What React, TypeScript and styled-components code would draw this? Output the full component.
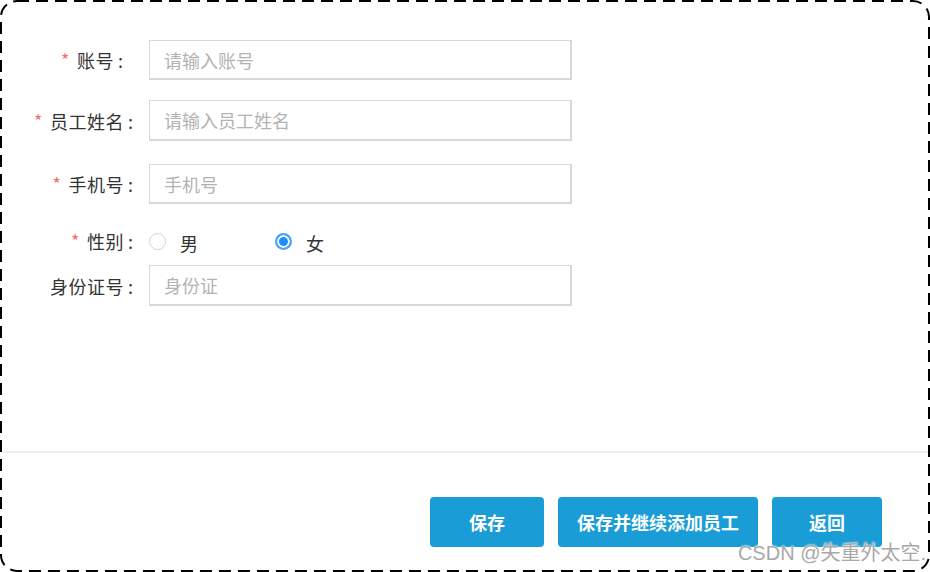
import * as React from 'react'
import styled, { createGlobalStyle } from 'styled-components'

const GlobalStyle = createGlobalStyle`
  html, body {
    margin: 0;
    padding: 0;
    background: #fff;
  }
  body {
    font-family: "Noto Sans CJK SC", "Liberation Sans", sans-serif;
  }
`

const Frame = styled.div`
  position: relative;
  width: 930px;
  height: 572px;
  box-sizing: border-box;
  display: flex;
  flex-direction: column;
  background: #fff;
  overflow: hidden;
`

const FrameLine = styled.svg`
  position: absolute;
  inset: 0;
  pointer-events: none;
`

const Form = styled.div`
  height: 451px;
  padding-top: 40px;
  box-sizing: border-box;
`

const Row = styled.div<{ $height?: number; $gap?: number }>`
  display: grid;
  grid-template-columns: 137px 423px;
  column-gap: 12px;
  align-items: center;
  height: ${p => p.$height ?? 41}px;
  margin-bottom: ${p => p.$gap ?? 0}px;
`

const Label = styled.label<{ $pad?: number }>`
  text-align: right;
  font-size: 18px;
  color: #333;
  white-space: nowrap;
  letter-spacing: 0.5px;
  padding-right: ${p => p.$pad ?? 4}px;
`

const Colon = styled.span`
  margin-left: 4px;
  letter-spacing: 0;
`

const Star = styled.span`
  color: #f56c6c;
  font-size: 18px;
  margin-right: 7px;
  position: relative;
  top: -1px;
`

const Input = styled.input`
  box-sizing: border-box;
  width: 100%;
  height: 100%;
  border: 1px solid #d8d8d8;
  border-right-width: 2px;
  border-bottom-width: 2px;
  padding: 0 14px;
  font-family: inherit;
  font-size: 18px;
  color: #333;
  outline: none;
  &::placeholder {
    color: #b3b3b3;
  }
`

const RadioGroup = styled.div`
  display: flex;
  align-items: center;
`

const RadioOption = styled.span`
  width: 126px;
  display: flex;
  align-items: center;
  gap: 14px;
`

const RadioDot = styled.span<{ $checked?: boolean }>`
  width: 17px;
  height: 17px;
  box-sizing: border-box;
  border-radius: 50%;
  border: ${p => (p.$checked ? '2px solid #4aa3ff' : '1px solid #d3d3d3')};
  background: ${p => (p.$checked ? '#1890ff' : '#fff')};
  box-shadow: ${p => (p.$checked ? 'inset 0 0 0 2px #fff' : 'none')};
`

const RadioText = styled.span`
  font-size: 18px;
  color: #333;
  position: relative;
  top: 2px;
`

const Divider = styled.div`
  height: 2px;
  background: #eeeeee;
  margin: 0 2px;
`

const Footer = styled.div`
  display: flex;
  justify-content: flex-end;
  gap: 14px;
  padding: 44px 48px 0 0;
`

const Button = styled.button<{ $width: number }>`
  width: ${p => p.$width}px;
  height: 50px;
  border: none;
  border-radius: 4px;
  background: #1a9dd6;
  color: #fff;
  font-family: inherit;
  font-size: 18px;
  font-weight: bold;
  cursor: pointer;
`

const Watermark = styled.div`
  position: absolute;
  right: 4px;
  bottom: 6px;
  font-family: "Liberation Sans", "Noto Sans CJK SC", sans-serif;
  font-size: 20px;
  color: #a8a8a8;
  text-shadow: 0 0 2px #fff, 0 0 2px #fff;
`

export default function App() {
  return (
    <>
      <GlobalStyle />
      <Frame>
        <Form>
          <Row $height={40} $gap={20}>
            <Label $pad={14}>
              <Star>*</Star>账号<Colon>:</Colon>
            </Label>
            <Input placeholder="请输入账号" />
          </Row>
          <Row $gap={23}>
            <Label>
              <Star>*</Star>员工姓名<Colon>:</Colon>
            </Label>
            <Input placeholder="请输入员工姓名" />
          </Row>
          <Row $height={40} $gap={24}>
            <Label>
              <Star>*</Star>手机号<Colon>:</Colon>
            </Label>
            <Input placeholder="手机号" />
          </Row>
          <Row $height={24} $gap={13}>
            <Label>
              <Star>*</Star>性别<Colon>:</Colon>
            </Label>
            <RadioGroup>
              <RadioOption>
                <RadioDot />
                <RadioText>男</RadioText>
              </RadioOption>
              <RadioOption>
                <RadioDot $checked />
                <RadioText>女</RadioText>
              </RadioOption>
            </RadioGroup>
          </Row>
          <Row>
            <Label>
              身份证号<Colon>:</Colon>
            </Label>
            <Input placeholder="身份证" />
          </Row>
        </Form>
        <Divider />
        <Footer>
          <Button $width={114}>保存</Button>
          <Button $width={200}>保存并继续添加员工</Button>
          <Button $width={110}>返回</Button>
        </Footer>
        <Watermark>CSDN @失重外太空.</Watermark>
        <FrameLine width="930" height="572" viewBox="0 0 930 572">
          <rect
            x="1"
            y="1"
            width="928"
            height="570"
            rx="16"
            fill="none"
            stroke="#000"
            strokeWidth="2"
            strokeDasharray="12 7"
          />
        </FrameLine>
      </Frame>
    </>
  )
}
